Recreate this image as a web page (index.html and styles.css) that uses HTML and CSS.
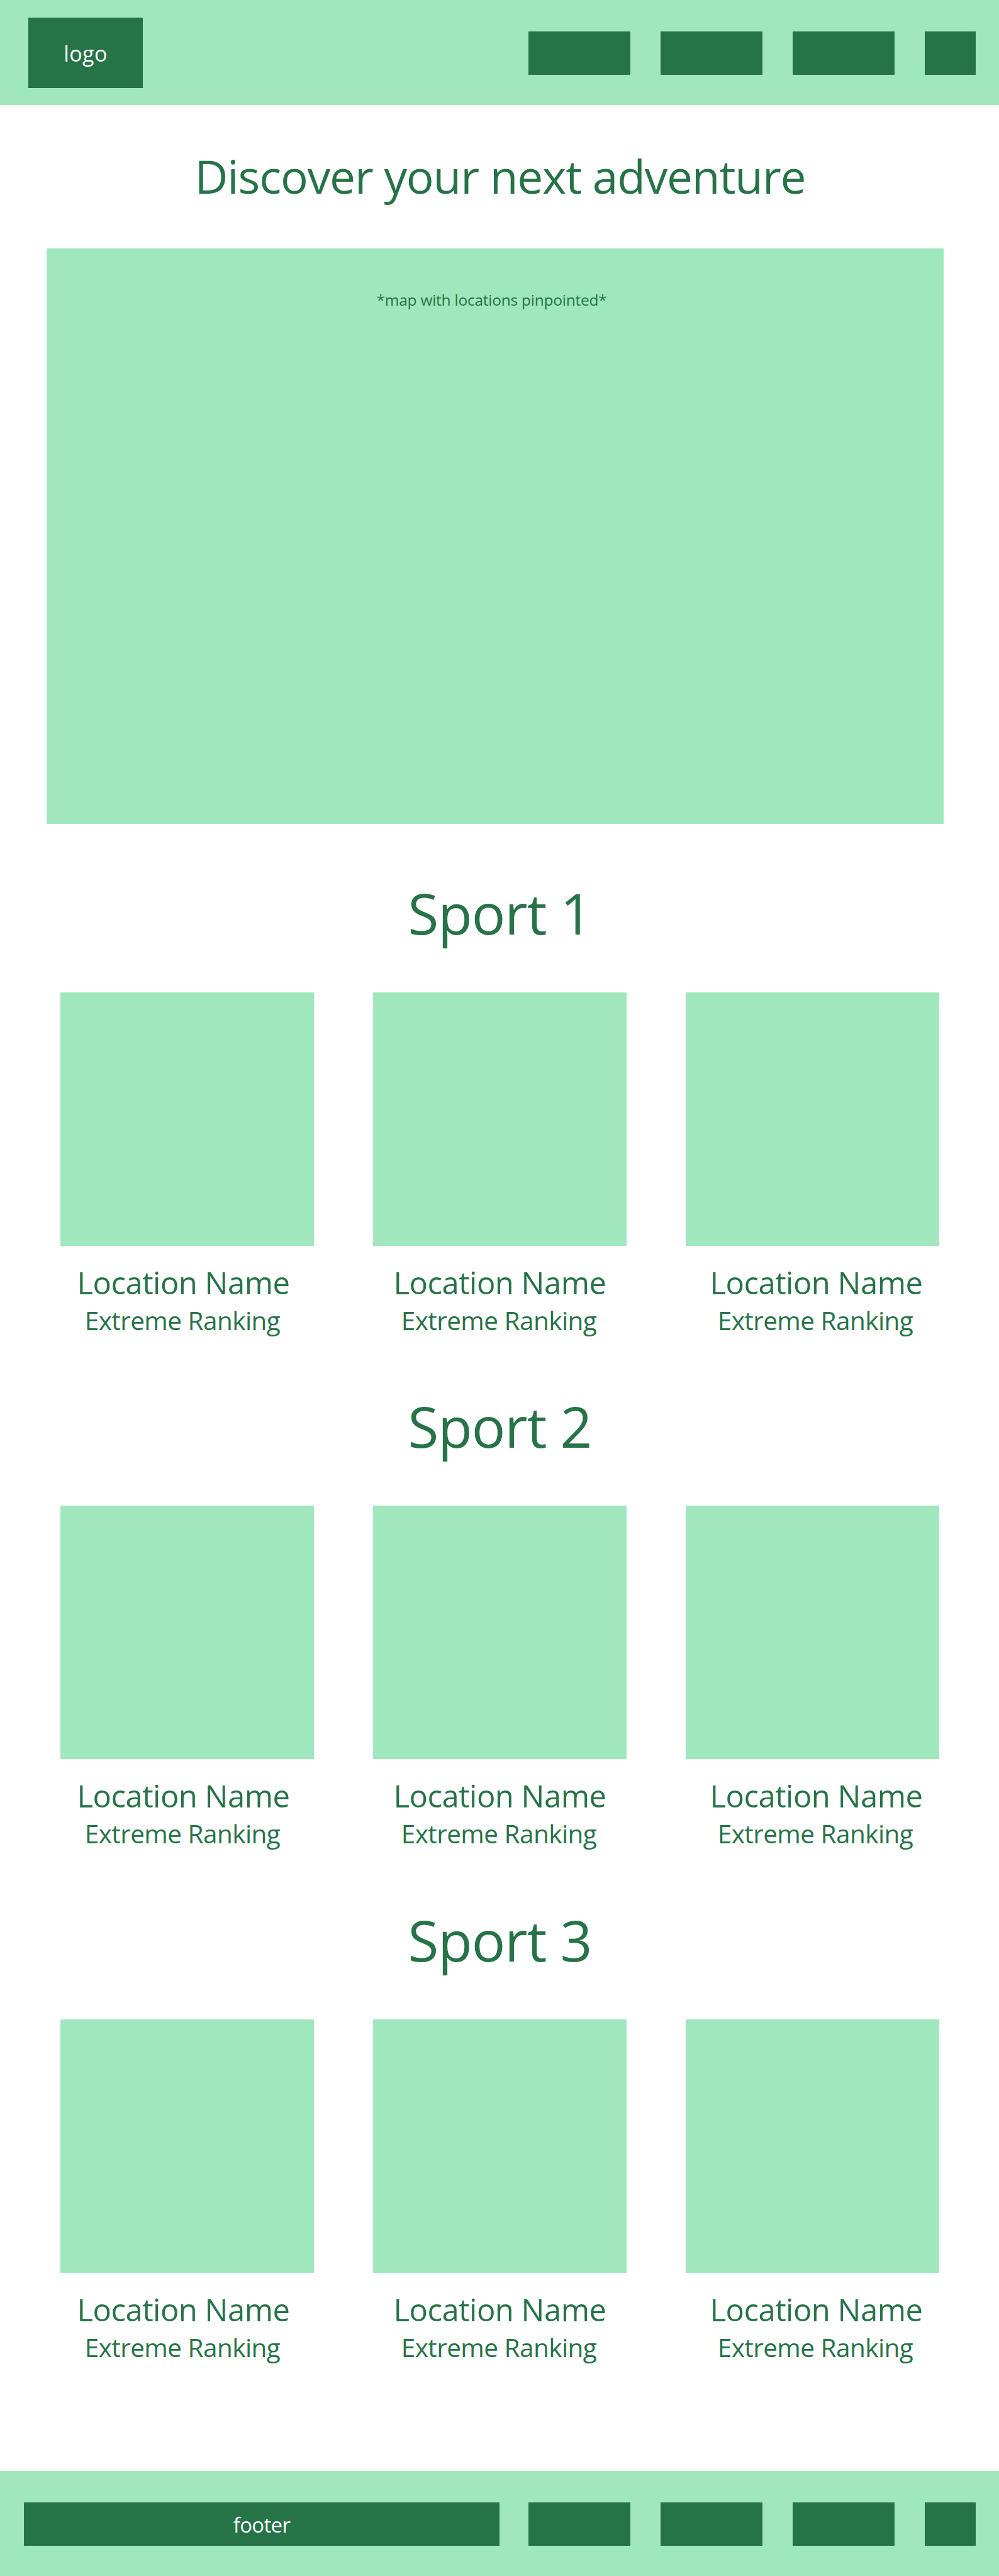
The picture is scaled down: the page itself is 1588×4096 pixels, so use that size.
FILE: index.html
```html
<!DOCTYPE html>
<html lang="en">
<head>
<meta charset="utf-8">
<title>Discover your next adventure</title>
<link rel="stylesheet" href="styles.css">
</head>
<body>
<header class="bar">
  <a class="logo">logo</a>
  <nav class="links"><a class="link"></a><a class="link"></a><a class="link"></a><a class="link link-small"></a></nav>
</header>
<main class="content">
  <h1 class="title">Discover your next adventure</h1>
  <div class="map">*map with locations pinpointed*</div>
  <section class="sport">
    <h2 class="sport-title">Sport 1</h2>
    <div class="cards">
      <article class="card"><div class="photo"></div><h3 class="name">Location Name</h3><p class="rank">Extreme Ranking</p></article>
      <article class="card"><div class="photo"></div><h3 class="name">Location Name</h3><p class="rank">Extreme Ranking</p></article>
      <article class="card"><div class="photo"></div><h3 class="name">Location Name</h3><p class="rank">Extreme Ranking</p></article>
    </div>
  </section>
  <section class="sport">
    <h2 class="sport-title">Sport 2</h2>
    <div class="cards">
      <article class="card"><div class="photo"></div><h3 class="name">Location Name</h3><p class="rank">Extreme Ranking</p></article>
      <article class="card"><div class="photo"></div><h3 class="name">Location Name</h3><p class="rank">Extreme Ranking</p></article>
      <article class="card"><div class="photo"></div><h3 class="name">Location Name</h3><p class="rank">Extreme Ranking</p></article>
    </div>
  </section>
  <section class="sport">
    <h2 class="sport-title">Sport 3</h2>
    <div class="cards">
      <article class="card"><div class="photo"></div><h3 class="name">Location Name</h3><p class="rank">Extreme Ranking</p></article>
      <article class="card"><div class="photo"></div><h3 class="name">Location Name</h3><p class="rank">Extreme Ranking</p></article>
      <article class="card"><div class="photo"></div><h3 class="name">Location Name</h3><p class="rank">Extreme Ranking</p></article>
    </div>
  </section>
</main>
<footer class="bar bar-bottom">
  <div class="footer-label">footer</div>
  <nav class="links"><a class="link"></a><a class="link"></a><a class="link"></a><a class="link link-small"></a></nav>
</footer>
</body>
</html>
```
FILE: styles.css
```css
:root {
  --light: #a1e7bd;
  --dark: #277348;
}

* {
  box-sizing: border-box;
  margin: 0;
  padding: 0;
}

body {
  display: flex;
  flex-direction: column;
  height: 4096px;
  background: #fff;
  color: var(--dark);
  font-family: "Open Sans", "Segoe UI", sans-serif;
  font-weight: 400;
}

h1, h2, h3 {
  font-weight: 400;
}

/* Header and footer bars */
.bar {
  display: flex;
  justify-content: space-between;
  align-items: flex-start;
  flex: none;
  height: 167px;
  padding: 28px 37px 0 45px;
  background: var(--light);
}

.bar-bottom {
  margin-top: auto;
  padding-left: 38px;
}

.logo {
  display: flex;
  align-items: center;
  justify-content: center;
  width: 182px;
  height: 112px;
  padding-top: 2px;
  background: var(--dark);
  color: #fff;
  font-size: 34px;
  letter-spacing: 0.4px;
}

.links {
  display: flex;
  gap: 48px;
  padding-top: 22px;
}

.link {
  width: 162px;
  height: 69px;
  background: var(--dark);
}

.link-small {
  width: 81px;
}

.footer-label {
  display: flex;
  align-items: center;
  justify-content: center;
  width: 756px;
  height: 69px;
  margin-top: 22px;
  padding-top: 2px;
  background: var(--dark);
  color: #fff;
  font-size: 33px;
  letter-spacing: -0.7px;
}

/* Intro */
.title {
  height: 227.5px;
  padding-left: 2px;
  font-size: 73px;
  line-height: 225px;
  letter-spacing: -1.16px;
  text-align: center;
  white-space: nowrap;
}

.map {
  width: 1426px;
  height: 915.5px;
  margin-left: 74px;
  padding: 64px 11px 0 0;
  background: var(--light);
  font-size: 24.5px;
  line-height: 36px;
  letter-spacing: -0.24px;
  text-align: center;
}

/* Sport sections */
.sport {
  height: 816.3px;
  padding: 82px 95px 0 96px;
}

.sport-title {
  font-size: 89px;
  line-height: 120px;
  letter-spacing: -1px;
  text-align: center;
}

.cards {
  display: flex;
  justify-content: space-between;
  margin-top: 66px;
}

.card {
  width: 403px;
  text-align: center;
}

.photo {
  height: 403px;
  margin-bottom: 28px;
  background: var(--light);
}

.name {
  font-size: 49px;
  line-height: 60px;
  letter-spacing: -0.53px;
}

.rank {
  margin-top: 1px;
  padding-right: 3px;
  font-size: 40.5px;
  line-height: 60px;
  letter-spacing: -0.55px;
}

/* Captions of the outer cards sit slightly outwards */
.card:first-child .name,
.card:first-child .rank {
  margin-left: -12px;
}

.card:last-child .name,
.card:last-child .rank {
  margin-right: -12px;
}
```
